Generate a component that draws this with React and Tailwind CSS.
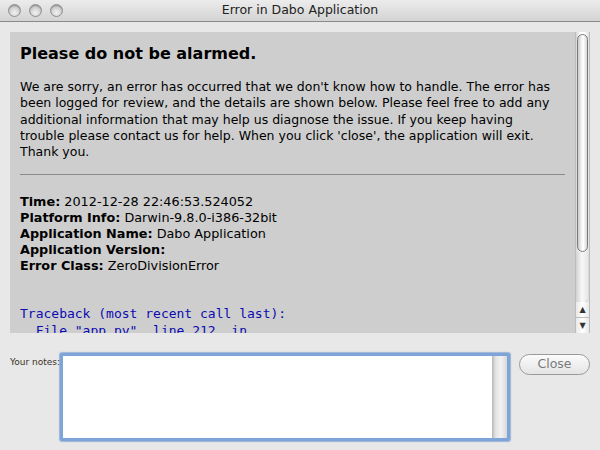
import React from 'react';

const BODY = [
  "We are sorry, an error has occurred that we don't know how to handle. The error has",
  'been logged for review, and the details are shown below. Please feel free to add any',
  'additional information that may help us diagnose the issue. If you keep having',
  "trouble please contact us for help. When you click 'close', the application will exit.",
  'Thank you.',
];

const DETAILS = [
  ['Time:', '2012-12-28 22:46:53.524052'],
  ['Platform Info:', 'Darwin-9.8.0-i386-32bit'],
  ['Application Name:', 'Dabo Application'],
  ['Application Version:', ''],
  ['Error Class:', 'ZeroDivisionError'],
];

function Light() {
  return (
    <div className="w-[13px] h-[13px] rounded-full border border-[#8f8f8f] bg-[radial-gradient(circle_at_50%_70%,#f2f2f2_0%,#d0d0d0_55%,#b4b4b4_100%)] shadow-[inset_0_1px_1px_rgba(0,0,0,0.25)]" />
  );
}

function ScrollBar() {
  return (
    <div className="w-[15px] h-full flex flex-col bg-[#e8e8e8]">
      <div className="flex-1 flex flex-col bg-[linear-gradient(to_right,#d6d6d6,#ffffff_35%,#ffffff_65%,#e0e0e0)] border-x border-[#bdbdbd] pt-[2px]">
        {/* thumb */}
        <div className="mx-[1px] h-[218px] rounded-full border border-[#7a7a7a] bg-[linear-gradient(to_right,#c8c8c8,#f4f4f4_40%,#ffffff_60%,#d4d4d4)]" />
        <div className="flex-1 mx-[1px] rounded-b-full bg-[linear-gradient(to_right,#d8d8d8,#f8f8f8_45%,#e6e6e6)] shadow-[0_2px_2px_rgba(0,0,0,0.12)]" />
      </div>
      <div className="h-[16px] flex items-center justify-center bg-[linear-gradient(to_right,#e8e8e8,#ffffff,#e8e8e8)] border-x border-b border-[#bdbdbd] text-[8px] leading-none text-[#333]">▲</div>
      <div className="h-[15px] flex items-center justify-center bg-[linear-gradient(to_right,#e8e8e8,#ffffff,#e8e8e8)] border-x border-[#bdbdbd] text-[8px] leading-none text-[#333]">▼</div>
    </div>
  );
}

export default function App() {
  return (
    <div className="w-[600px] h-[450px] bg-[#e8e8e8] overflow-hidden font-['DejaVu_Sans',sans-serif] text-black">
      {/* Title bar */}
      <div className="h-[22px] flex items-center px-[8px] gap-[8px] bg-[linear-gradient(#ececec,#d3d3d3)] border-b border-[#8a8a8a] relative">
        <Light />
        <Light />
        <Light />
        <div className="absolute inset-0 flex items-center justify-center text-[12.5px] text-[#222] pointer-events-none">Error in Dabo Application</div>
      </div>

      {/* Report panel */}
      <div className="mt-[10px] ml-[10px] w-[580px] h-[301px] flex">
        <div className="flex-1 bg-[#cecece] overflow-hidden pl-[10px] pt-[10px]">
          <h1 className="text-[16px] font-bold leading-[24px]">Please do not be alarmed.</h1>
          <div className="mt-[13px] text-[12.5px] leading-[16.3px]">
            {BODY.map((l, i) => <div key={i} className="whitespace-nowrap">{l}</div>)}
          </div>
          <div className="mt-[14px] mr-[10px] h-px bg-[#8a8a8a]" />
          <div className="mt-[19px] text-[12.8px] leading-[16px]">
            {DETAILS.map(([k, v]) => (
              <div key={k} className="whitespace-nowrap"><span className="font-bold">{k}</span> {v}</div>
            ))}
          </div>
          <div className="mt-[31px] font-['DejaVu_Sans_Mono',monospace] text-[13px] leading-[17px] text-[#0b0bb0] whitespace-pre">
            <div>Traceback (most recent call last):</div>
            <div>{'  File "app.py", line 212, in'}</div>
          </div>
        </div>
        <ScrollBar />
      </div>

      {/* Notes row */}
      <div className="mt-[20px] ml-[10px] flex items-start">
        <div className="w-[50px] pt-[3px] text-[9px] text-[#3a3226] whitespace-nowrap">Your notes:</div>
        <div className="w-[450px] h-[88px] rounded-[2px] border-[3px] border-[#7ea5d8] shadow-[0_0_1px_1px_rgba(80,130,200,0.5)] bg-white flex">
          <div className="flex-1" />
          <div className="w-[15px] bg-[linear-gradient(to_right,#b8b8b8,#e4e4e4_25%,#f2f2f2_60%,#d8d8d8)]" />
        </div>
        <div className="ml-[9px] mt-[1px] w-[71px] h-[21px] rounded-full border border-[#9a9a9a] bg-[linear-gradient(#fbfbfb,#e4e4e4)] flex items-center justify-center text-[12.5px] text-[#7a7a7a]">Close</div>
      </div>
    </div>
  );
}
